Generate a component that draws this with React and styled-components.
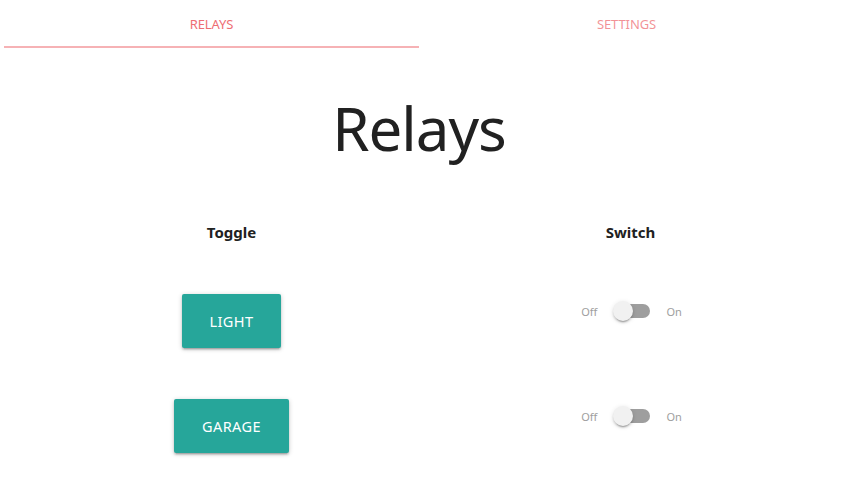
import React from 'react';
import styled, { createGlobalStyle } from 'styled-components';

const GlobalStyle = createGlobalStyle`
  html, body {
    margin: 0;
    padding: 0;
    background: #fff;
    font-family: "Noto Sans", "Open Sans", sans-serif;
    color: rgba(0, 0, 0, 0.87);
  }
`;

const Page = styled.div`
  width: 838px;
  min-height: 492px;
`;

const TabBar = styled.div`
  display: flex;
  height: 48px;
  width: 830px;
  margin-left: 4px;
`;

const Tab = styled.div`
  flex: 1;
  display: flex;
  align-items: center;
  justify-content: center;
  font-size: 13px;
  letter-spacing: -0.1px;
  text-transform: uppercase;
  color: ${p => (p.$active ? '#ee6e73' : 'rgba(238, 110, 115, 0.75)')};
  border-bottom: 2px solid ${p => (p.$active ? '#f6b2b5' : 'transparent')};
  box-sizing: border-box;
  padding-top: 2px;
`;

const Title = styled.h1`
  margin: 44px 0 0;
  text-align: center;
  font-weight: 400;
  font-size: 60px;
  line-height: 72px;
  letter-spacing: -1px;
  color: #212121;
`;

const Grid = styled.div`
  display: grid;
  grid-template-columns: 399px 399px;
  grid-template-rows: 56px repeat(2, 105px);
  margin: 48px 0 0 32px;
`;

const ColHead = styled.div`
  display: flex;
  justify-content: center;
  align-items: center;
  height: 40px;
  font-weight: 700;
  font-size: 15px;
  color: #212121;
`;

const ButtonCell = styled.div`
  display: flex;
  justify-content: center;
  align-items: center;
`;

const SwitchCell = styled.div`
  display: flex;
  justify-content: center;
  align-items: flex-start;
  padding-top: ${p => p.$top}px;
`;

const LargeButton = styled.button`
  height: 54px;
  padding: 0 28px;
  border: none;
  border-radius: 2px;
  background: #26a69a;
  color: #fff;
  font-family: inherit;
  font-size: 14.5px;
  letter-spacing: 0.4px;
  text-transform: uppercase;
  box-shadow: 0 2px 2px 0 rgba(0, 0, 0, 0.14), 0 3px 1px -2px rgba(0, 0, 0, 0.12),
    0 1px 5px 0 rgba(0, 0, 0, 0.2);
  cursor: pointer;
`;

const SwitchLabel = styled.label`
  display: flex;
  align-items: center;
  font-size: 11px;
  color: #9e9e9e;
  height: 20px;
  margin-left: 2px;
`;

const Lever = styled.span`
  position: relative;
  display: inline-block;
  width: 36px;
  height: 14px;
  margin: 0 16px 0 17px;
  border-radius: 15px;
  background: rgba(0, 0, 0, 0.38);

  &::after {
    content: '';
    position: absolute;
    left: -1px;
    top: -3px;
    width: 20px;
    height: 20px;
    border-radius: 50%;
    background: #f1f1f1;
    box-shadow: 0 3px 1px -2px rgba(0, 0, 0, 0.2), 0 2px 2px 0 rgba(0, 0, 0, 0.14),
      0 1px 5px 0 rgba(0, 0, 0, 0.12);
  }
`;

const relays = ['Light', 'Garage'];

function Switch() {
  return (
    <SwitchLabel>
      Off
      <Lever />
      On
    </SwitchLabel>
  );
}

export default function App() {
  return (
    <Page>
      <GlobalStyle />
      <TabBar>
        <Tab $active>Relays</Tab>
        <Tab>Settings</Tab>
      </TabBar>
      <Title>Relays</Title>
      <Grid>
        <ColHead>Toggle</ColHead>
        <ColHead>Switch</ColHead>
        {relays.map(name => (
          <React.Fragment key={name}>
            <ButtonCell>
              <LargeButton>{name}</LargeButton>
            </ButtonCell>
            <SwitchCell $top={33}>
              <Switch />
            </SwitchCell>
          </React.Fragment>
        ))}
      </Grid>
    </Page>
  );
}
